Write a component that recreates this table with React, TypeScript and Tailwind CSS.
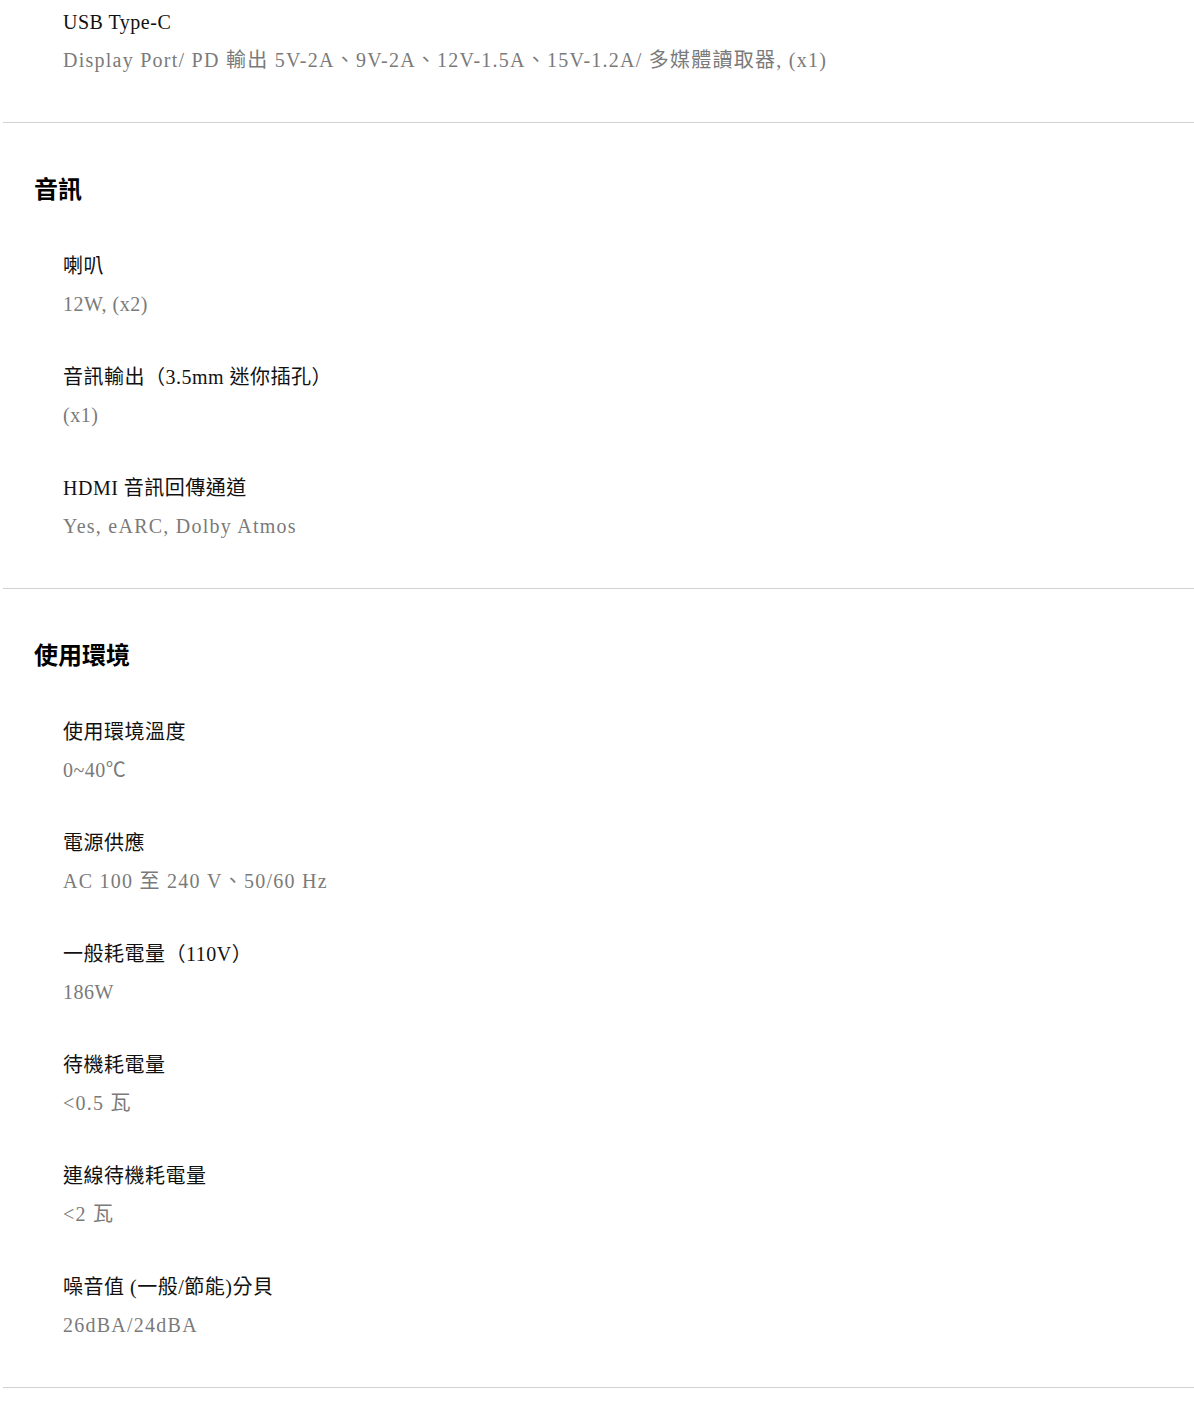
import React from "react";

// Spec sheet: grouped rows of label + value, each group closed by a hairline.

type Item = { label: string; value: string; wide?: boolean };
type Group = { title?: string; items: Item[] };

const GROUPS: Group[] = [
  {
    items: [
      {
        label: "USB Type-C",
        value: "Display Port/ PD 輸出 5V-2A、9V-2A、12V-1.5A、15V-1.2A/ 多媒體讀取器, (x1)",
        wide: true,
      },
    ],
  },
  {
    title: "音訊",
    items: [
      { label: "喇叭", value: "12W, (x2)" },
      { label: "音訊輸出（3.5mm 迷你插孔）", value: "(x1)" },
      { label: "HDMI 音訊回傳通道", value: "Yes, eARC, Dolby Atmos", wide: true },
    ],
  },
  {
    title: "使用環境",
    items: [
      { label: "使用環境溫度", value: "0~40℃" },
      { label: "電源供應", value: "AC 100 至 240 V、50/60 Hz", wide: true },
      { label: "一般耗電量（110V）", value: "186W" },
      { label: "待機耗電量", value: "<0.5 瓦", wide: true },
      { label: "連線待機耗電量", value: "<2 瓦", wide: true },
      { label: "噪音值 (一般/節能)分貝", value: "26dBA/24dBA", wide: true },
    ],
  },
];

export default function App() {
  return (
    <div className="min-h-screen bg-white pl-[3px] font-['Liberation_Serif','Noto_Sans_CJK_TC',serif] text-black">
      {GROUPS.map((g, i) => (
        <section
          key={i}
          className={`border-b border-[#d2d2d2] pb-[43px] ${g.title ? "pt-[49px]" : "pt-[3px]"}`}
        >
          {g.title && (
            <h2 className="mb-[39px] pl-[31px] text-[24px] font-bold leading-[36px]">{g.title}</h2>
          )}
          <div className="flex flex-col gap-[35px] pl-[60px]">
            {g.items.map((it) => (
              <div key={it.label}>
                <div className="text-[20px] leading-[38px] tracking-[0.5px] text-[#111]">{it.label}</div>
                <div
                  className={`text-[20px] leading-[38px] text-[#7a7a7a] ${
                    it.wide ? "tracking-[1.25px]" : "tracking-[0.5px]"
                  }`}
                >
                  {it.value}
                </div>
              </div>
            ))}
          </div>
        </section>
      ))}
    </div>
  );
}
